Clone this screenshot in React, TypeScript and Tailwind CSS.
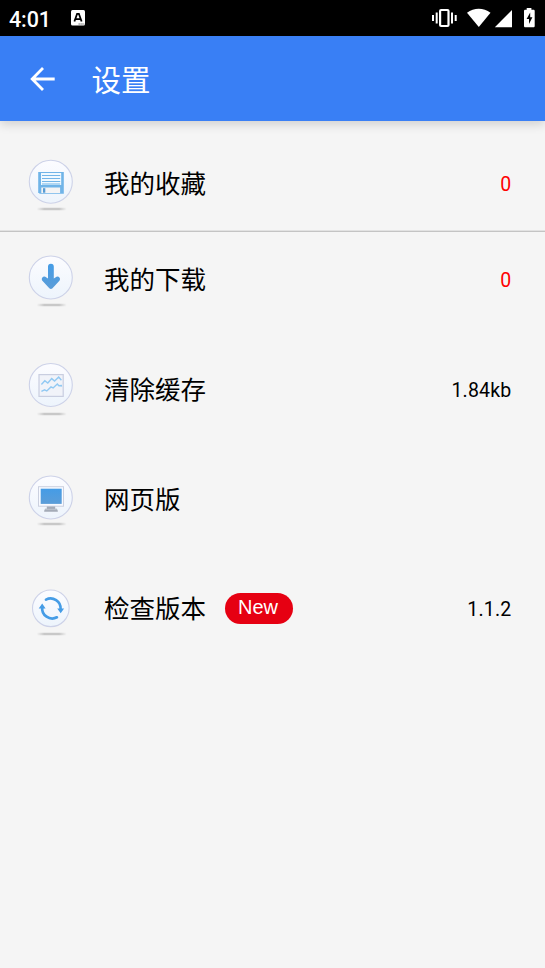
import type { ReactNode } from 'react';
import clsx from 'clsx';

interface SettingItem {
  id: string;
  label: string;
  value?: string;
  alert?: boolean;
  badge?: string;
  icon: ReactNode;
  className: string;
}

/** 圆形底座 + 底部投影，cy / shadowY 由各图标自行微调 */
function IconBase({ id, cy, r = 21.5, shadowY, children }: { id: string; cy: number; r?: number; shadowY: number; children: ReactNode }) {
  return (
    <svg width="54" height="64" viewBox="0 0 54 64" className="block shrink-0">
      <defs>
        <linearGradient id={`${id}-bg`} x1="0" y1="0" x2="0" y2="1">
          <stop offset="0" stopColor="#fcfcff" />
          <stop offset="1" stopColor="#edf4fc" />
        </linearGradient>
        <linearGradient id={`${id}-fg`} x1="0" y1="0" x2="0" y2="1">
          <stop offset="0" stopColor="#459ce6" />
          <stop offset="1" stopColor="#5b9dd8" />
        </linearGradient>
        <linearGradient id={`${id}-shadow`}>
          <stop offset="0" stopColor="#c8c8c8" stopOpacity="0" />
          <stop offset="0.25" stopColor="#c8c8c8" />
          <stop offset="0.75" stopColor="#c8c8c8" />
          <stop offset="1" stopColor="#c8c8c8" stopOpacity="0" />
        </linearGradient>
      </defs>
      <circle cx="26.8" cy={cy} r={r} fill={`url(#${id}-bg)`} stroke="#cdd2e8" strokeWidth="1.1" />
      <rect x="12.7" y={shadowY - 1.2} width="30" height="2.4" rx="1.2" fill={`url(#${id}-shadow)`} />
      {children}
    </svg>
  );
}

function FavoriteIcon() {
  return (
    <IconBase id="fav" cy={30.7} shadowY={58}>
      <path d="M14.2 21h25.6v21.8H15.7l-1.5-1.5z" fill="#70b4e8" />
      <rect x="17" y="22" width="20.2" height="12" fill="#f1f9ff" />
      <path d="M18 24.5h18.2M18 27.5h18.2M18 30.5h18.2M18 33h18.2" stroke="#73b5e8" strokeWidth="1.1" />
      <rect x="17.3" y="36.5" width="18.8" height="5.5" fill="#f4f4f5" />
      <rect x="19" y="37.2" width="2.3" height="4.5" fill="#569bd4" />
    </IconBase>
  );
}

function DownloadIcon() {
  return (
    <IconBase id="down" cy={30.5} shadowY={58}>
      <path
        d="M24 19.6a2.9 2.9 0 0 1 5.8 0v11.8l1.6-1c1.5-1.1 3.2-1 4 .1.9 1.1.8 2.5-.2 3.5l-6.7 7.2c-1 .9-2.2.9-3.2 0L18.6 34c-1-1-1.1-2.4-.2-3.5.8-1.1 2.5-1.2 4-.1l1.6 1z"
        fill="url(#down-fg)"
      />
    </IconBase>
  );
}

function CacheIcon() {
  return (
    <IconBase id="cache" cy={28} shadowY={57}>
      <rect x="15" y="17.6" width="24.2" height="21.8" fill="#f1f3f9" stroke="#c9cee0" strokeWidth="1.2" />
      <path
        d="m17.4 27.4 3.4-3.6 3 2.2 3.9-4.4 2.9 2.5 4.1-4.1 2.7 3.2M17.4 34.4l3.2-1.6 2.2 1.2 4.2-4.1 2.1 1 4.2-3.9 1.6 1.8 2.4-.3.2 1.2"
        fill="none"
        stroke="#91c9f3"
        strokeWidth="1.4"
      />
    </IconBase>
  );
}

function WebIcon() {
  return (
    <IconBase id="web" cy={30.5} shadowY={57}>
      <rect x="14.5" y="19.7" width="25" height="19.5" fill="#f8faff" stroke="#cbd0df" strokeWidth="1" />
      <rect x="16.7" y="21.7" width="21" height="15.2" fill="url(#web-fg)" />
      <path d="M22.8 39.6h8.4v2.1h1.7l.9 2v1.1H20.2v-1.1l.9-2h1.7z" fill="#a4abb7" />
      <path d="M21.2 42.3h11.6" stroke="#c7ccd3" strokeWidth="0.8" />
    </IconBase>
  );
}

function VersionIcon() {
  return (
    <IconBase id="ver" cy={32.3} r={18.3} shadowY={58}>
      <path d="M22 23.6A10.1 10.1 0 0 1 36.6 33.3" fill="none" stroke="#459ce6" strokeWidth="2.7" strokeLinecap="round" />
      <path d="M32.9 41.3A10.1 10.1 0 0 1 18.2 31.3" fill="none" stroke="#459ce6" strokeWidth="2.7" strokeLinecap="round" />
      <path d="M33.2 32.6h6.9l-3.4 4.7zM14.7 32.4h6.9l-3.4-4.9z" fill="#459ce6" />
    </IconBase>
  );
}

const items: SettingItem[] = [
  { id: 'favorite', label: '我的收藏', value: '0', alert: true, icon: <FavoriteIcon />, className: 'h-24' },
  { id: 'download', label: '我的下载', value: '0', alert: true, icon: <DownloadIcon />, className: 'h-[94px] mb-2' },
  { id: 'cache', label: '清除缓存', value: '1.84kb', icon: <CacheIcon />, className: 'h-[110px]' },
  { id: 'web', label: '网页版', icon: <WebIcon />, className: 'h-[110px]' },
  { id: 'version', label: '检查版本', value: '1.1.2', badge: 'New', icon: <VersionIcon />, className: 'h-[108px]' },
];

function StatusBar() {
  return (
    <div className="flex h-9 shrink-0 items-center bg-black pl-[9px] text-white">
      <span className="w-[62px] pt-[3px] font-['Roboto'] text-[21.5px] leading-none font-medium tracking-[-0.1px]">4:01</span>
      <svg width="14" height="16" viewBox="0 0 14 16">
        <rect width="14" height="15.5" rx="1.5" fill="#fff" />
        <path d="m3.4 11.5 2.7-7.7h1.8l2.7 7.7M4.8 9.1h4.4" fill="none" stroke="#000" strokeWidth="1.8" />
        <path d="M7.5 14h6" stroke="#555" strokeWidth="0.9" strokeDasharray="1.4 .5" />
      </svg>
      {/* 震动 / Wi-Fi / 信号 / 电量 */}
      <svg width="113" height="36" viewBox="432 0 113 36" className="ml-auto">
        <g fill="none" stroke="#fff">
          <rect x="440.1" y="10" width="8.4" height="16" rx="1" strokeWidth="2.2" />
          <path d="M436.7 12.5v11M452 12.5v11" strokeWidth="2" />
          <path d="M433 15v6M455.7 15v6" strokeWidth="2" />
        </g>
        <path d="M467 12.8c7-5.4 16.5-5.4 23.5 0L478.8 27z" fill="#fff" />
        <path d="M512 10v17.2h-17.2z" fill="#fff" />
        <path d="M526.7 8h4.7v1.8h2c.8 0 1.3.5 1.3 1.2v15c0 .8-.5 1.3-1.3 1.3h-8c-.8 0-1.4-.5-1.4-1.3V11c0-.7.6-1.2 1.4-1.2h1.3z" fill="#fff" />
        <path d="m530.2 12.5-3.6 6.5h2.4v5l3.4-6.8h-2.2z" fill="#000" />
      </svg>
    </div>
  );
}

function SettingRow({ item }: { item: SettingItem }) {
  return (
    <li className={clsx('flex items-center pr-[33.5px] pl-6', item.className)}>
      {item.icon}
      <span className="ml-[26px] pt-1 text-[25.5px] leading-none">{item.label}</span>
      {item.badge && (
        <span className="ml-[19px] flex h-[31px] w-[68px] items-center justify-center rounded-full bg-[#e60012] pr-[2px] pb-[2px] font-['Liberation_Sans'] text-xl leading-none text-white">
          {item.badge}
        </span>
      )}
      {item.value && (
        <span className={clsx("ml-auto font-['Roboto'] text-[19.5px] leading-none tracking-[0.2px]", item.alert ? 'pt-1 text-[#ff0000]' : 'pt-[3px]')}>
          {item.value}
        </span>
      )}
    </li>
  );
}

export default function App() {
  return (
    <div className="flex h-screen flex-col overflow-hidden bg-[#f5f5f5] font-['Roboto','Noto_Sans_CJK_SC',sans-serif] text-black">
      <StatusBar />
      <header className="relative flex h-[85px] shrink-0 items-center bg-[#397ff5] pl-[30px] text-white shadow-[0_3px_10px_rgba(0,0,0,0.16)]">
        <svg width="25" height="24" viewBox="0 0 25 24" fill="none" stroke="currentColor" strokeWidth="2.8">
          <path d="M24.7 12H2.5M13 1.1 2.2 12 13 22.9" />
        </svg>
        <h1 className="ml-[36.5px] pt-[6px] text-[29.5px] leading-none">设置</h1>
      </header>
      <ul className="mt-[14px]">
        <SettingRow item={items[0]} />
        <li className="-mt-px h-0.5 border-t border-[#e2e2e2] bg-[#c4c4c4]" />
        {items.slice(1).map((item) => (
          <SettingRow key={item.id} item={item} />
        ))}
      </ul>
    </div>
  );
}
